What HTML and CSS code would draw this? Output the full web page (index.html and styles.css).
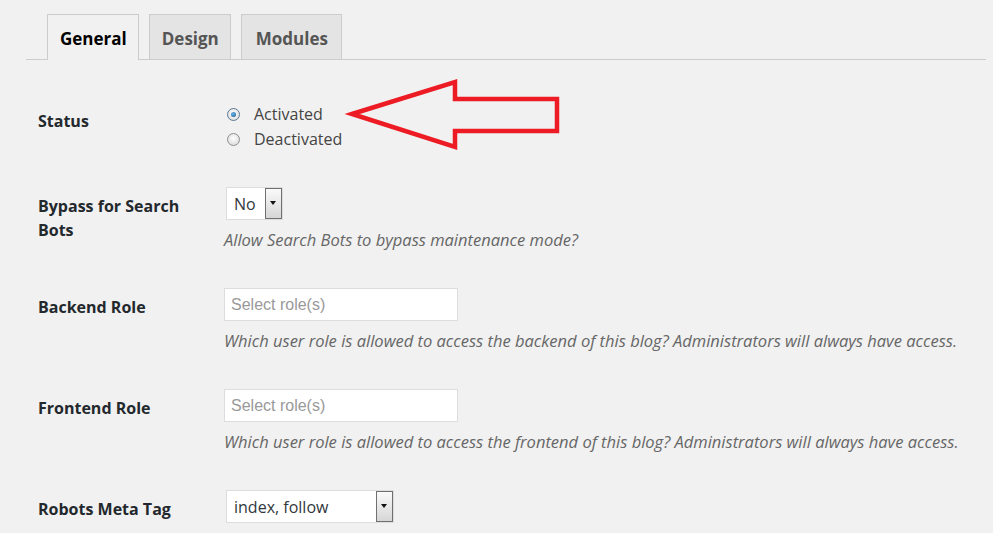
FILE: index.html
```html
<!DOCTYPE html>
<html lang="en">

<head>
    <meta charset="UTF-8">
    <meta name="viewport" content="width=device-width, initial-scale=1.0">
    <title>Maintenance Settings</title>
    <link rel="stylesheet" href="styles.css">
</head>

<body>
    <div class="wrap">
        <div class="nav-tabs">
            <a href="#" class="nav-tab active">General</a>
            <a href="#" class="nav-tab">Design</a>
            <a href="#" class="nav-tab">Modules</a>
        </div>

        <form class="settings">
            <div class="row">
                <div class="label status">Status</div>
                <div class="field radios">
                    <label class="radio"><span class="dot checked"></span>Activated</label>
                    <label class="radio"><span class="dot"></span>Deactivated</label>
                </div>
            </div>

            <div class="row">
                <div class="label">Bypass for Search Bots</div>
                <div class="field">
                    <div class="select small"><span>No</span><span class="select-btn"></span></div>
                    <p class="desc">Allow Search Bots to bypass maintenance mode?</p>
                </div>
            </div>

            <div class="row">
                <div class="label">Backend Role</div>
                <div class="field">
                    <input class="roles" type="text" placeholder="Select role(s)">
                    <p class="desc">Which user role is allowed to access the backend of this blog? Administrators will always have access.</p>
                </div>
            </div>

            <div class="row">
                <div class="label">Frontend Role</div>
                <div class="field">
                    <input class="roles" type="text" placeholder="Select role(s)">
                    <p class="desc">Which user role is allowed to access the frontend of this blog? Administrators will always have access.</p>
                </div>
            </div>

            <div class="row">
                <div class="label">Robots Meta Tag</div>
                <div class="field">
                    <div class="select wide"><span>index, follow</span><span class="select-btn"></span></div>
                </div>
            </div>
        </form>
    </div>

    <!-- annotation arrow over the status options -->
    <svg class="arrow" width="230" height="90" viewBox="340 70 230 90">
        <polygon points="352,114 455,82 455,99 557,99 557,131 455,131 455,147"
            fill="none" stroke="#ed1c24" stroke-width="4.5" stroke-linejoin="miter" stroke-miterlimit="10" />
    </svg>
</body>

</html>
```

FILE: styles.css
```css
html,
body {
    margin: 0;
    height: 533px;
    overflow: hidden;
}

body {
    position: relative;
    background-color: #f1f1f1;
    font-family: "Open Sans", "Noto Sans", sans-serif;
    color: #32373c;
}

.wrap {
    margin: 0 7px 0 26px;
}

.nav-tabs {
    display: flex;
    gap: 10px;
    padding: 14px 0 0 21px;
    border-bottom: 1px solid #ccc;
}

.nav-tab {
    display: block;
    height: 44px;
    line-height: 48px;
    padding: 0 11px 0 12px;
    margin-bottom: -1px;
    border: 1px solid #ccc;
    border-bottom: none;
    background-color: #e4e4e4;
    color: #555;
    font-size: 17px;
    font-weight: 700;
    text-decoration: none;
}

.nav-tab:last-child {
    padding: 0 13px 0 14px;
}

.nav-tab.active {
    background-color: #f1f1f1;
    color: #000;
    height: 45px;
}

.settings {
    padding: 26px 0 0 12px;
}

.row {
    display: flex;
}

.label {
    width: 160px;
    margin-right: 26px;
    padding-top: 22px;
    font-size: 16px;
    line-height: 24px;
    font-weight: 700;
    color: #23282d;
}

.label.status {
    padding-top: 23px;
}

.field {
    padding: 15px 0 21px;
}

.radios {
    display: flex;
    flex-direction: column;
    padding-top: 16px;
    padding-bottom: 21px;
}

.radio {
    display: flex;
    align-items: center;
    height: 24px;
    margin-left: 3px;
    font-size: 16px;
    color: #444;
}

.radio:last-child {
    padding-top: 1px;
}

.dot {
    width: 11px;
    height: 11px;
    margin-right: 14px;
    border: 1px solid #8f8f8f;
    border-radius: 50%;
    background: radial-gradient(circle at 50% 40%, #fff, #d4d4d4);
    display: flex;
    align-items: center;
    justify-content: center;
}

.dot.checked {
    border-color: #5b7a96;
}

.dot.checked::after {
    content: "";
    width: 5px;
    height: 5px;
    border-radius: 50%;
    background: radial-gradient(circle at 40% 35%, #6fb6ea, #0f5a96);
}

.select {
    display: flex;
    height: 31px;
    margin-left: 2px;
    border: 1px solid #ddd;
    background-color: #fff;
    font-size: 16px;
    color: #32373c;
}

.select span:first-child {
    flex: 1;
    padding: 1px 0 0 7px;
    line-height: 31px;
}

.select.small {
    width: 55px;
}

.select.wide {
    width: 166px;
}

.select-btn {
    position: relative;
    width: 15px;
    border: 1px solid #707070;
    background: linear-gradient(#fafafa, #d6d6d6);
}

.select-btn::after {
    content: "";
    position: absolute;
    left: 4px;
    top: 12px;
    border-left: 3.5px solid transparent;
    border-right: 3.5px solid transparent;
    border-top: 4px solid #111;
}

.roles {
    display: block;
    box-sizing: border-box;
    width: 234px;
    height: 33px;
    margin: 0;
    padding: 0 6px;
    border: 1px solid #ddd;
    background-color: #fff;
    font-family: "Liberation Sans", Arial, sans-serif;
    font-size: 16px;
    outline: none;
}

.roles::placeholder {
    color: #999;
}

.desc {
    margin: 8px 0 0;
    line-height: 24px;
    font-size: 16.5px;
    font-style: italic;
    color: #666;
}

.arrow {
    position: absolute;
    left: 340px;
    top: 70px;
}
```
